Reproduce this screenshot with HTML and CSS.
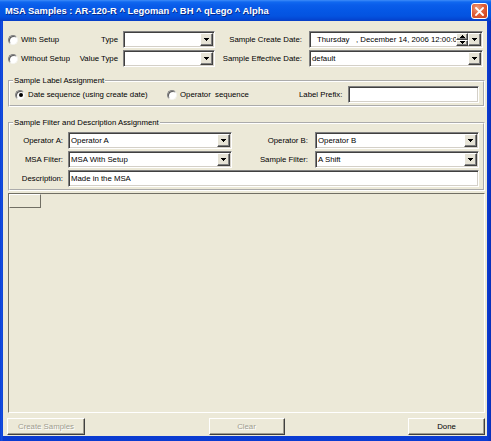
FILE: index.html
```html
<!DOCTYPE html>
<html>
<head>
<meta charset="utf-8">
<link rel="stylesheet" href="styles.css">
</head>
<body>
<div class="window">
  <div class="titlebar">
    <span class="title">MSA Samples : AR-120-R ^ Legoman ^ BH ^ qLego ^ Alpha</span>
    <span class="close"><svg width="9" height="9" viewBox="0 0 9 9"><path d="M1 1L8 8M8 1L1 8" stroke="#fff" stroke-width="1.8" stroke-linecap="square"/></svg></span>
  </div>
  <div class="client">
    <div class="top">
      <div class="row">
        <div class="radio-item top-radio"><span class="radio"></span><span class="rtext">With Setup</span></div>
        <span class="lbl lbl-type">Type</span>
        <div class="combo c-small"><span class="val"></span><span class="dd"><svg width="5" height="3" viewBox="0 0 5 3"><path d="M0 0h5v1h-1v1h-1v1h-1v-1h-1v-1h-1z"/></svg></span></div>
        <span class="lbl lbl-date">Sample Create Date:</span>
        <div class="combo c-date">
          <span class="val dp-text">Thursday   , December 14, 2006 12:00:00</span>
          <span class="spin">
            <span class="spin-btn"><svg width="5" height="3" viewBox="0 0 5 3"><path d="M2 0h1v1h1v1h1v1h-5v-1h1v-1h1z"/></svg></span>
            <span class="spin-btn"><svg width="5" height="3" viewBox="0 0 5 3"><path d="M0 0h5v1h-1v1h-1v1h-1v-1h-1v-1h-1z"/></svg></span>
          </span>
          <span class="dd"><svg width="5" height="3" viewBox="0 0 5 3"><path d="M0 0h5v1h-1v1h-1v1h-1v-1h-1v-1h-1z"/></svg></span>
        </div>
      </div>
      <div class="row">
        <div class="radio-item top-radio"><span class="radio"></span><span class="rtext">Without Setup</span></div>
        <span class="lbl lbl-type">Value Type</span>
        <div class="combo c-small"><span class="val"></span><span class="dd"><svg width="5" height="3" viewBox="0 0 5 3"><path d="M0 0h5v1h-1v1h-1v1h-1v-1h-1v-1h-1z"/></svg></span></div>
        <span class="lbl lbl-date">Sample Effective Date:</span>
        <div class="combo c-date"><span class="val">default</span><span class="dd"><svg width="5" height="3" viewBox="0 0 5 3"><path d="M0 0h5v1h-1v1h-1v1h-1v-1h-1v-1h-1z"/></svg></span></div>
      </div>
    </div>

    <fieldset class="group g1">
      <legend>Sample Label Assignment</legend>
      <div class="g1-row">
        <div class="radio-item opt-date"><span class="radio checked"></span><span class="rtext">Date sequence (using create date)</span></div>
        <div class="radio-item opt-oper"><span class="radio"></span><span class="rtext">Operator&nbsp; sequence</span></div>
        <span class="lbl lbl-prefix">Label Prefix:</span>
        <div class="field prefix-field"></div>
      </div>
    </fieldset>

    <fieldset class="group g2">
      <legend>Sample Filter and Description Assignment</legend>
      <div class="g2-grid">
        <span class="lbl glbl">Operator A:</span>
        <div class="combo"><span class="val">Operator A</span><span class="dd"><svg width="5" height="3" viewBox="0 0 5 3"><path d="M0 0h5v1h-1v1h-1v1h-1v-1h-1v-1h-1z"/></svg></span></div>
        <span class="lbl glbl2">Operator B:</span>
        <div class="combo"><span class="val">Operator B</span><span class="dd"><svg width="5" height="3" viewBox="0 0 5 3"><path d="M0 0h5v1h-1v1h-1v1h-1v-1h-1v-1h-1z"/></svg></span></div>

        <span class="lbl glbl">MSA Filter:</span>
        <div class="combo"><span class="val">MSA With Setup</span><span class="dd"><svg width="5" height="3" viewBox="0 0 5 3"><path d="M0 0h5v1h-1v1h-1v1h-1v-1h-1v-1h-1z"/></svg></span></div>
        <span class="lbl glbl2">Sample Filter:</span>
        <div class="combo"><span class="val">A Shift</span><span class="dd"><svg width="5" height="3" viewBox="0 0 5 3"><path d="M0 0h5v1h-1v1h-1v1h-1v-1h-1v-1h-1z"/></svg></span></div>

        <span class="lbl glbl">Description:</span>
        <div class="field desc-field"><span class="val">Made in the MSA</span></div>
      </div>
    </fieldset>

    <div class="grid">
      <div class="grid-head"></div>
    </div>

    <div class="buttons">
      <span class="btn disabled btn-create">Create Samples</span>
      <span class="btn disabled btn-clear">Clear</span>
      <span class="btn btn-done">Done</span>
    </div>
  </div>
</div>
</body>
</html>
```
FILE: styles.css
```css
* { box-sizing: border-box; }
html, body {
  margin: 0;
  padding: 0;
}
body {
  width: 491px;
  height: 441px;
  overflow: hidden;
  font-family: "Liberation Sans", Arial, sans-serif;
  font-size: 7.8px;
  color: #000;
}
.window {
  width: 491px;
  height: 441px;
  display: flex;
  flex-direction: column;
  background: linear-gradient(90deg, #0B3FD6 0px, #1550E0 2px, #0A3BD0 3px, #0B3CD3 487px, #0A2FB8 491px);
}
.titlebar {
  height: 21px;
  flex: none;
  display: flex;
  align-items: center;
  justify-content: space-between;
  padding: 0 3px 0 5px;
  background: linear-gradient(180deg, #3E8CF8 0px, #1068F0 2px, #0A5DEA 5px, #0558E6 10px, #0453E0 16px, #0448D4 19px, #083DC4 21px);
}
.title {
  color: #fff;
  font-weight: bold;
  font-size: 9.4px;
  white-space: nowrap;
  text-shadow: 1px 1px #0B2A8A;
}
.close {
  width: 17px;
  height: 16px;
  margin-top: 1px;
  border: 1px solid #fff;
  border-radius: 3px;
  background: radial-gradient(circle at 35% 30%, #F0A080 0%, #E0603A 45%, #CC3E15 100%);
  display: flex;
  align-items: center;
  justify-content: center;
}
.client {
  flex: 1;
  margin: 0 4px 5px 3px;
  background: #ECE9D8;
  display: flex;
  flex-direction: column;
}

/* top rows */
.top {
  padding: 10px 0 0 5px;
  display: flex;
  flex-direction: column;
  gap: 2px;
}
.row {
  display: flex;
  align-items: center;
  height: 17px;
}
.radio-item {
  display: flex;
  align-items: center;
  white-space: nowrap;
  overflow: hidden;
}
.top-radio { width: 62px; margin-right: 1px; }
.radio {
  flex: none;
  width: 10px;
  height: 10px;
  border-radius: 50%;
  background: #fff;
  border: 1px solid;
  border-color: #808080 #F4F4F0 #F4F4F0 #808080;
  box-shadow: inset 1px 1px 0 #5A5A5A;
  margin-right: 3px;
  display: flex;
  align-items: center;
  justify-content: center;
}
.radio.checked::after {
  content: "";
  width: 4px;
  height: 4px;
  border-radius: 50%;
  background: #000;
  margin: 1px 0 0 1px;
}
.lbl {
  white-space: nowrap;
}
.lbl-type {
  width: 52px;
  text-align: right;
  padding-right: 5px;
}
.lbl-date {
  width: 94px;
  text-align: right;
  padding-right: 7px;
}
.combo, .field {
  height: 17px;
  background: #fff;
  border: 1px solid;
  border-color: #808080 #fff #fff #808080;
  box-shadow: inset 1px 1px 0 #404040, inset -1px -1px 0 #D4D0C8;
  padding: 1px;
  display: flex;
  align-items: stretch;
}
.c-small { width: 92px; }
.c-date { width: 174px; }
.val {
  flex: 1;
  display: flex;
  align-items: center;
  padding-left: 1px;
  white-space: nowrap;
  overflow: hidden;
}
.dp-text {
  white-space: pre;
  padding-left: 6px;
  min-width: 0;
}
.dd, .spin-btn {
  flex: none;
  width: 13px;
  background: #E6E3D6;
  border: 1px solid;
  border-color: #fff #404040 #404040 #fff;
  box-shadow: inset -1px -1px 0 #808080;
  display: flex;
  align-items: center;
  justify-content: center;
}
.dd svg, .spin-btn svg { display: block; fill: #000; }
.spin {
  flex: none;
  width: 12px;
  display: flex;
  flex-direction: column;
}
.spin-btn {
  width: 12px;
  flex: 1;
}

/* group boxes */
.group {
  margin: 0 2px 0 5px;
  min-width: 0;
  border: 2px groove #fff;
  padding: 0 4px 2px 5px;
}
.group legend {
  line-height: 10px;
  height: 10px;
  padding: 0 1px;
  margin-left: -2px;
  white-space: nowrap;
}
.g1 { margin-top: 9px; }
.g1-row {
  display: flex;
  align-items: center;
  height: 17px;
}
.opt-date { width: 152px; }
.opt-oper { width: 132px; }
.lbl-prefix { width: 49px; }
.prefix-field { flex: 1; }

.g2 {
  margin-top: 11px;
  padding-top: 4px;
}
.g2-grid {
  display: grid;
  grid-template-columns: 53px 164px 83px 1fr;
  grid-auto-rows: 17px;
  row-gap: 2px;
  align-items: center;
}
.glbl {
  text-align: right;
  padding-right: 5px;
}
.glbl2 {
  text-align: right;
  padding-right: 7px;
}
.desc-field {
  grid-column: 2 / 5;
}

/* data grid */
.grid {
  flex: 1;
  margin: 2px 2px 0 5px;
  border: 1px solid;
  border-color: #716F64 #fff #fff #716F64;
  background: #ECE9D8;
}
.grid-head {
  width: 32px;
  height: 14px;
  border-right: 1px solid #716F64;
  border-bottom: 1px solid #716F64;
  border-top: 1px solid #fff;
  border-left: 1px solid #fff;
}

/* buttons */
.buttons {
  display: flex;
  justify-content: space-between;
  padding: 0 2px 0 4px;
  margin: 5px 0 1px;
}
.btn {
  height: 17px;
  display: flex;
  align-items: center;
  justify-content: center;
  background: #ECE9D8;
  border: 1px solid;
  border-color: #fff #404040 #404040 #fff;
  box-shadow: inset -1px -1px 0 #A09D90;
  white-space: nowrap;
}
.btn-create { width: 78px; }
.btn-clear { width: 76px; }
.btn-done { width: 77px; }
.btn.disabled {
  color: #A09D90;
  text-shadow: 1px 1px 0 #fff;
}
```
